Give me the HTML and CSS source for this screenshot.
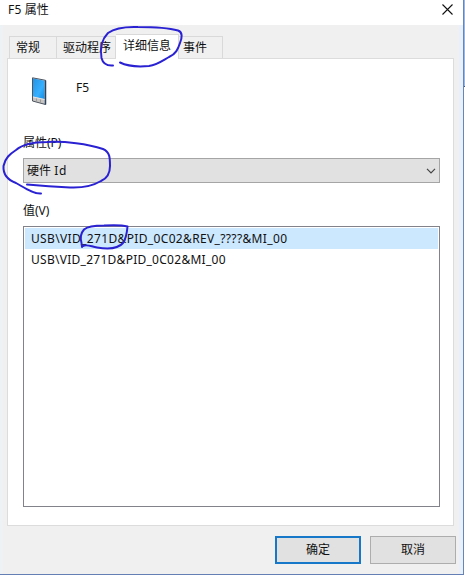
FILE: index.html
```html
<!DOCTYPE html>
<html lang="zh-CN">
<head>
<meta charset="utf-8">
<title>F5 属性</title>
<link rel="stylesheet" href="styles.css">
</head>
<body>
<div class="desktop">
<main class="window">
  <header class="titlebar">
    <span class="title">F5 属性</span>
    <svg class="close" width="11" height="11" viewBox="0 0 11 11"><path d="M.5 .5 10.5 10.5M10.5 .5 .5 10.5"/></svg>
  </header>
  <nav class="tabs">
    <span class="tab general">常规</span>
    <span class="tab driver">驱动程序</span>
    <span class="tab details active">详细信息</span>
    <span class="tab events">事件</span>
  </nav>
  <section class="panel">
    <div class="device">
      <svg class="device-icon" width="16" height="29" viewBox="0 0 16 29">
        <defs><linearGradient id="screen" x1="0" y1="0" x2="1" y2="1"><stop offset="0" stop-color="#2494e4"/><stop offset=".6" stop-color="#36b0ff"/><stop offset="1" stop-color="#168ce0"/></linearGradient></defs>
        <path d="M1.500 .8 14.500 3.300V27.500L1.500 24Z" fill="#c6c3c3" stroke="#4d5560" stroke-width="1"/>
        <path d="M2 1.500 13.500 3.800V22L2 19.500Z" fill="url(#screen)"/>
        <path d="M14.500 3.500V27.500" stroke="#29435f" stroke-width="1.500"/>
        <path d="M2 20 13.500 22.500" stroke="#eee" stroke-width=".8"/>
        <path d="M5.500 21.500v3M9.500 22.500v3" stroke="#96908f" stroke-width=".8"/>
      </svg>
      <span class="device-name">F5</span>
    </div>
    <div class="label property-label">属性(P)</div>
    <div class="select"><span>硬件 <span class="id">Id</span></span><svg width="10" height="6" viewBox="0 0 10 6"><path d="M1 .8 5 4.8 9 .8"/></svg></div>
    <div class="label value-label">值(V)</div>
    <div class="list">
      <div class="row selected"><span class="long">USB\VID_271D&amp;PID_0C02&amp;REV_????&amp;MI_00</span></div>
      <div class="row"><span class="short">USB\VID_271D&amp;PID_0C02&amp;MI_00</span></div>
    </div>
  </section>
  <footer class="actions"><span class="button primary">确定</span><span class="button">取消</span></footer>
</main>
<aside class="edge"></aside>
</div>
<svg class="ink" width="465" height="576" viewBox="0 0 465 576">
  <path d="M113 65.500C107 66 103 64 101.500 58C100 49 101 40 108 33C115 28 125 26.500 138 27C153 27 169 28 178 30.500C183 32 182 38 180 43C178 49 176 54 169 57C162 61 157 65 149 66C138 67 127 66 120 62.500"/>
  <path d="M41 193.500C33 194 25 188 16 183C8 180 3 174 3.500 166C5 158 10 154 16 150C23 144 33 142 47 142C65 141 88 144 103 149C110 152 110 158 110 166C110 173 108 178 101 181C91 187 82 188 70 187.500C57 187 42 186 27 184.500"/>
  <path d="M82 247L81.500 243C80 238 81 233 84 229.500C88 226 95 225.500 104 225.500C113 225 122 225 127.500 226.500C127 232 126.500 238 123 243C118 249 106 249 97 247.500C91 246.500 87 244 83 246"/>
</svg>
</body>
</html>
```

FILE: styles.css
```css
* { box-sizing: border-box; }
body { margin: 0; overflow: hidden; background: #fff; color: #111; font: 12px/16px "Noto Sans", "Noto Sans CJK SC", sans-serif; }
.desktop { display: flex; width: 465px; height: 576px; }
.window { display: flex; flex-direction: column; width: 464px; height: 575px; background: #f0f0f0; border-right: 1px solid #6686b9; border-bottom: 1px solid #637fb3; box-shadow: inset -4px 0 #e8f1fb, inset 3px 0 #edf2f5; }
.titlebar { display: flex; justify-content: space-between; height: 25px; padding: 2px 10px 0 8px; background: #fff; }
.title { letter-spacing: .15px; }
.close { margin-top: 2px; fill: none; stroke: #111; stroke-width: 1.1; }
.tabs { display: flex; align-items: flex-end; height: 33px; padding-left: 9px; }
.tab { height: 22px; padding: 3px 0 0 6px; border: 1px solid #d9d9d9; border-bottom: 0; border-left: 0; white-space: nowrap; }
.general { width: 48px; border-left: 1px solid #d9d9d9; }
.driver { width: 59px; }
.details { width: 63px; padding-left: 7px; }
.events { width: 44px; padding-left: 4px; }
.active { position: relative; height: 25px; margin-bottom: -1px; padding-top: 3px; background: #fff; }
.panel { width: 447px; height: 468px; margin-left: 7px; padding: 18px 13px 0 15px; background: #fff; border: 1px solid #dcdcdc; }
.device { display: flex; height: 58px; padding-left: 8px; }
.device-icon { width: 16px; height: 29px; }
.device-name { margin: 3px 0 0 29px; }
.label { height: 16px; }
.select { display: flex; align-items: center; justify-content: space-between; width: 417px; height: 25px; margin-top: 7px; padding: 0 3px 0 3px; background: #e1e1e1; border: 1px solid #a5a5a5; }
.id { letter-spacing: .8px; }
.select svg { fill: none; stroke: #444; stroke-width: 1.2; }
.value-label { margin-top: 20px; }
.list { width: 417px; height: 281px; margin-top: 7px; padding: 1px; border: 1px solid #82828a; }
.row { height: 21px; padding: 3px 0 0 6px; line-height: 16px; white-space: nowrap; }
.selected { background: #cce8ff; }
.long { letter-spacing: .35px; }
.short { letter-spacing: .27px; }
.actions { display: flex; gap: 9px; justify-content: flex-end; margin-top: 10px; padding-right: 7px; }
.button { display: flex; align-items: center; justify-content: center; width: 86px; height: 28px; background: #e1e1e1; border: 1px solid #adadad; }
.primary { border: 2px solid #1777c8; }
.edge { width: 1px; height: 87px; background: #9bb8dc; border-bottom: 1px solid #425675; }
.ink { position: absolute; left: 0; top: 0; fill: none; stroke: #2a22d2; stroke-width: 2; stroke-linecap: round; stroke-linejoin: round; pointer-events: none; }
```
